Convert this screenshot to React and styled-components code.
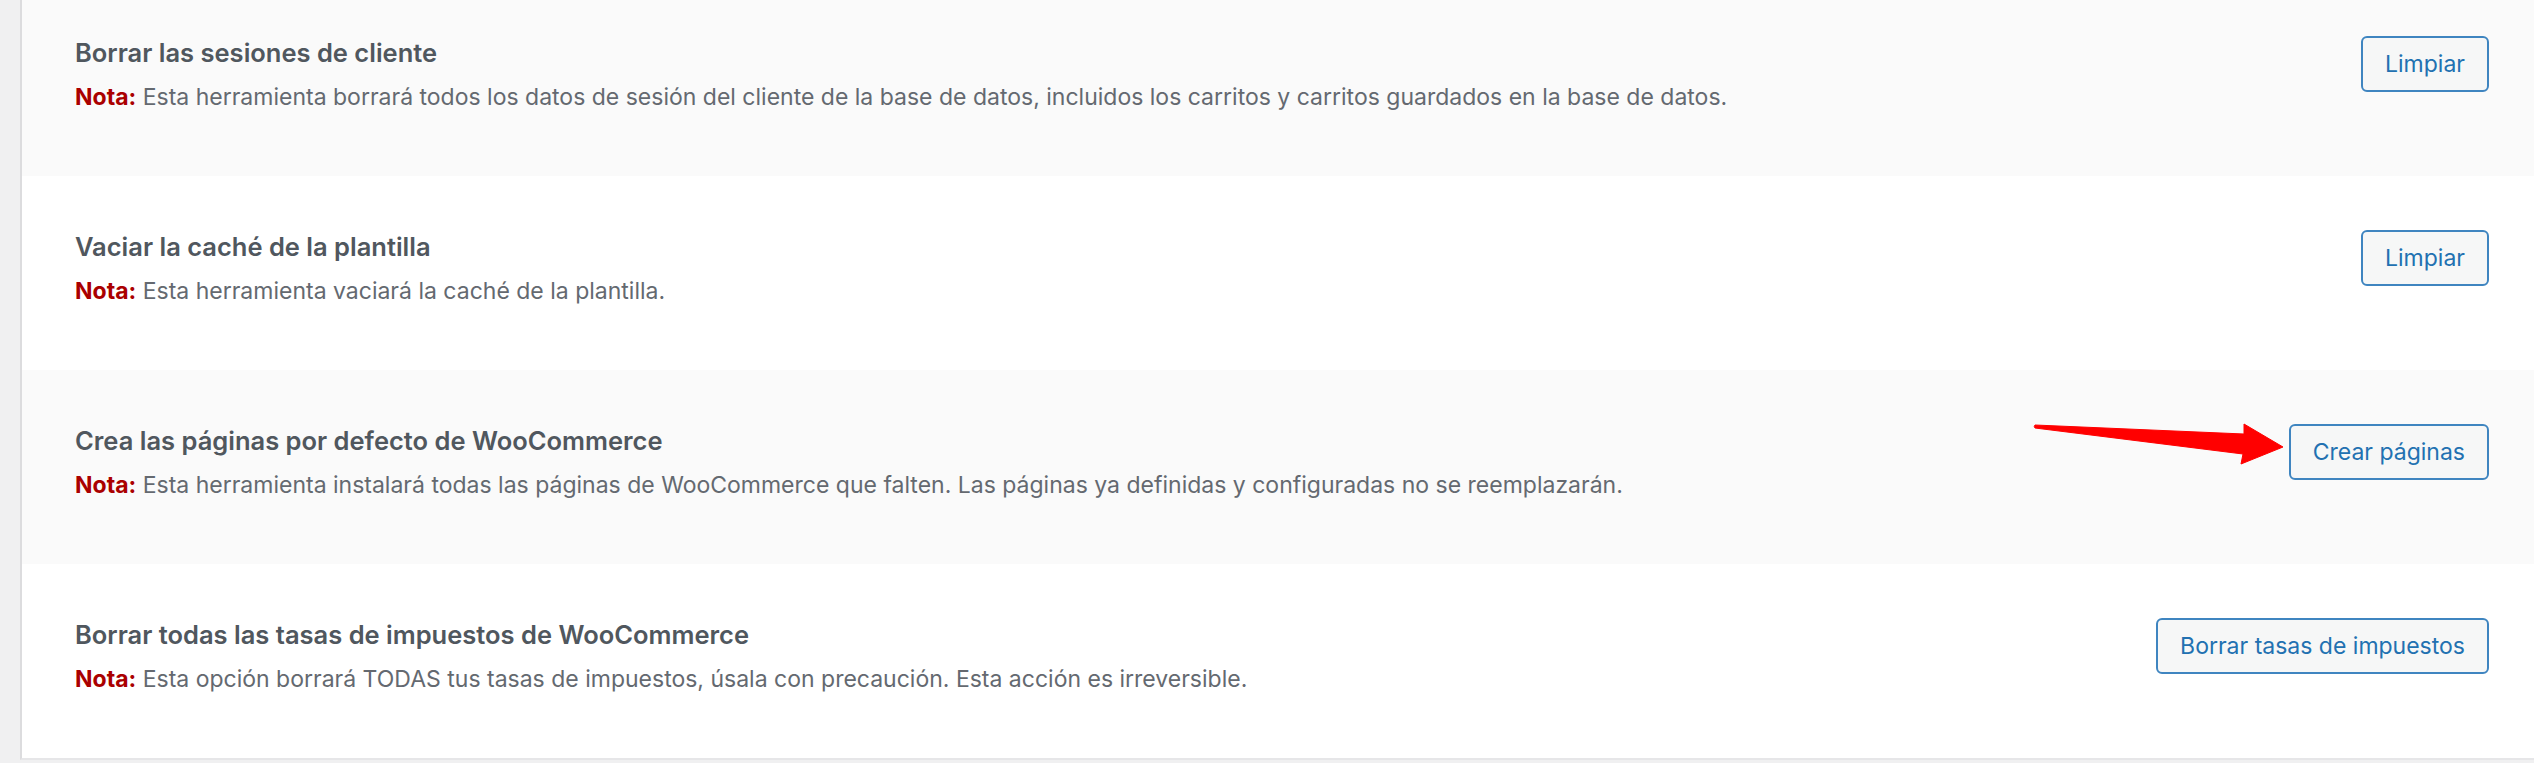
import React from 'react'
import styled, { createGlobalStyle } from 'styled-components'

const GlobalStyle = createGlobalStyle`
    html, body {
        margin: 0;
        padding: 0;
        background: #f0f0f1;
        font-family: Inter, "Noto Sans", "Liberation Sans", sans-serif;
        overflow: hidden;
    }
`

const Page = styled.div`
    height: 763px;
    padding-left: 20px;
    overflow: hidden;
`

const ToolsTable = styled.div`
    margin-top: -18px;
    background: #fff;
    border-left: 2px solid #dcdcde;
    border-bottom: 2px solid #e6e6e8;
`

const ToolRow = styled.div`
    display: flex;
    justify-content: space-between;
    align-items: flex-start;
    height: 194px;
    box-sizing: border-box;
    padding: 54px 45px 0 53px;
    background: ${(p) => (p.$striped ? '#fafafa' : '#ffffff')};
`

const Info = styled.div`
    display: flex;
    flex-direction: column;
`

const Title = styled.strong`
    font-size: 25.5px;
    line-height: 34px;
    font-weight: 600;
    color: #50575e;
`

const Description = styled.p`
    margin: 11px 0 0;
    font-size: 23px;
    line-height: 32px;
    color: #646970;
`

const Warning = styled.strong`
    color: #aa0000;
    font-weight: 700;
`

const Action = styled.div`
    position: relative;
    flex-shrink: 0;
`

const Button = styled.button`
    height: 56px;
    padding: 0 22px;
    border: 2px solid #3f85c0;
    border-radius: 6px;
    background: #f6f7f7;
    color: #2271b1;
    font-family: inherit;
    font-size: 23px;
    cursor: pointer;
`

const Arrow = styled.svg`
    position: absolute;
    right: calc(100% + 3px);
    top: -4px;
`

const PointerArrow = () => (
    <Arrow width="254" height="48" viewBox="0 0 254 48">
        <path
            d="M3 5 L212 14 L212 4 L251 27 L209 44 L211 34 L3 8 Q1.5 6.5 3 5 Z"
            fill="#ff0000"
            stroke="#ff0000"
            strokeWidth="1"
            strokeLinejoin="round"
        />
    </Arrow>
)

const tools = [
    {
        title: 'Borrar las sesiones de cliente',
        note: 'Esta herramienta borrará todos los datos de sesión del cliente de la base de datos, incluidos los carritos y carritos guardados en la base de datos.',
        button: 'Limpiar',
    },
    {
        title: 'Vaciar la caché de la plantilla',
        note: 'Esta herramienta vaciará la caché de la plantilla.',
        button: 'Limpiar',
    },
    {
        title: 'Crea las páginas por defecto de WooCommerce',
        note: 'Esta herramienta instalará todas las páginas de WooCommerce que falten. Las páginas ya definidas y configuradas no se reemplazarán.',
        button: 'Crear páginas',
        pointed: true,
    },
    {
        title: 'Borrar todas las tasas de impuestos de WooCommerce',
        note: 'Esta opción borrará TODAS tus tasas de impuestos, úsala con precaución. Esta acción es irreversible.',
        button: 'Borrar tasas de impuestos',
    },
]

const App = () => (
    <>
        <GlobalStyle />
        <Page>
            <ToolsTable>
                {tools.map((tool, i) => (
                    <ToolRow key={tool.title} $striped={i % 2 === 0}>
                        <Info>
                            <Title>{tool.title}</Title>
                            <Description>
                                <Warning>Nota:</Warning> {tool.note}
                            </Description>
                        </Info>
                        <Action>
                            {tool.pointed && <PointerArrow />}
                            <Button>{tool.button}</Button>
                        </Action>
                    </ToolRow>
                ))}
            </ToolsTable>
        </Page>
    </>
)

export default App
